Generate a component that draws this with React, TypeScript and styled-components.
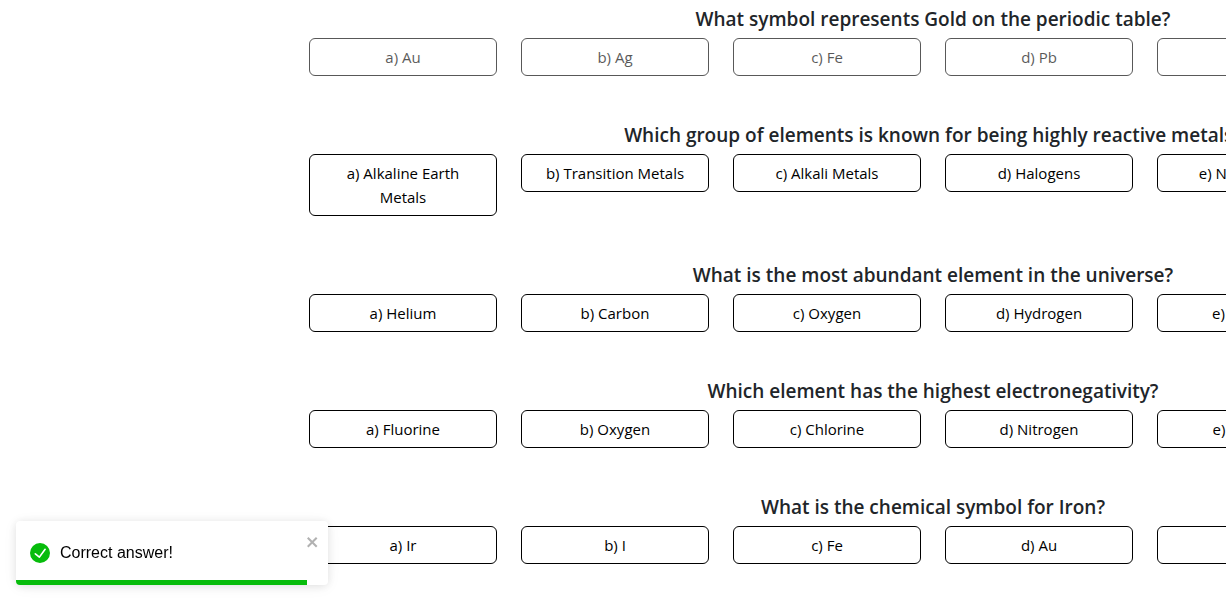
import React, { useState } from "react";
import styled, { createGlobalStyle } from "styled-components";

const GlobalStyle = createGlobalStyle`
  *, *::before, *::after { box-sizing: border-box; }
  body {
    margin: 0;
    background: #fff;
    color: #212529;
    font-family: "Segoe UI", "Open Sans", "Noto Sans", sans-serif;
    font-size: 15px;
    line-height: 24px;
  }
`;

const Page = styled.main`
  overflow: hidden;
  min-height: 100vh;
  padding: 7px 0 48px 309px;
`;

const Quiz = styled.div`
  display: flex;
  flex-direction: column;
  gap: 47px;
  width: max-content;
`;

const Question = styled.section`
  display: flex;
  flex-direction: column;
  gap: 7px;
`;

const Title = styled.h2`
  margin: 0;
  font-size: 19px;
  font-weight: 600;
  line-height: 24px;
  text-align: center;
`;

const Options = styled.div`
  display: grid;
  grid-template-columns: repeat(6, 188px);
  gap: 24px;
  align-items: start;
`;

const Option = styled.button`
  padding: 6px 12px;
  border: 1px solid #000;
  border-radius: 6px;
  background: transparent;
  color: #000;
  font: inherit;
  text-align: center;
  cursor: pointer;

  &:disabled {
    opacity: 0.65;
    cursor: default;
  }
`;

const Toast = styled.div`
  position: fixed;
  left: 16px;
  bottom: 28px;
  display: flex;
  align-items: center;
  gap: 10px;
  width: 312px;
  height: 64px;
  padding: 0 8px 0 14px;
  overflow: hidden;
  border-radius: 4px;
  background: #fff;
  box-shadow: 0 1px 10px rgba(0, 0, 0, 0.1), 0 2px 15px rgba(0, 0, 0, 0.05);
  color: #000;
  font-family: "Liberation Sans", Arial, sans-serif;
  font-size: 16px;
`;

const Message = styled.span`
  flex: 1;
`;

const Close = styled.button`
  display: flex;
  align-self: flex-start;
  margin: 13px 0 0;
  padding: 0;
  border: 0;
  background: transparent;
  color: #000;
  opacity: 0.3;
  cursor: pointer;
`;

const Progress = styled.div`
  position: absolute;
  left: 0;
  bottom: 0;
  height: 5px;
  background: #07bc0c;
`;

const questions = [
  { title: "What symbol represents Gold on the periodic table?", options: ["Au", "Ag", "Fe", "Pb", "Hg"], answered: true },
  {
    title: "Which group of elements is known for being highly reactive metals?",
    options: ["Alkaline Earth Metals", "Transition Metals", "Alkali Metals", "Halogens", "Noble Gases"],
  },
  { title: "What is the most abundant element in the universe?", options: ["Helium", "Carbon", "Oxygen", "Hydrogen", "Nitrogen"] },
  { title: "Which element has the highest electronegativity?", options: ["Fluorine", "Oxygen", "Chlorine", "Nitrogen", "Bromine"] },
  { title: "What is the chemical symbol for Iron?", options: ["Ir", "I", "Fe", "Au", "In"] },
];

export default function App() {
  const [open, setOpen] = useState(true);
  const remaining = 93.3;

  return (
    <>
      <GlobalStyle />
      <Page>
        <Quiz>
          {questions.map((q) => (
            <Question key={q.title}>
              <Title>{q.title}</Title>
              <Options>
                {q.options.map((text, i) => (
                  <Option key={text} type="button" disabled={q.answered}>
                    {`${"abcde"[i]}) ${text}`}
                  </Option>
                ))}
              </Options>
            </Question>
          ))}
        </Quiz>
      </Page>
      {open && (
        <Toast role="alert">
          <svg viewBox="0 0 24 24" width="20" height="20" fill="#07bc0c" aria-hidden="true">
            <path d="M12 0a12 12 0 1012 12A12.014 12.014 0 0012 0zm6.927 8.2l-6.845 9.289a1.011 1.011 0 01-1.43.188l-4.888-3.908a1 1 0 111.25-1.562l4.076 3.261 6.227-8.451a1 1 0 111.61 1.183z" />
          </svg>
          <Message>Correct answer!</Message>
          <Close type="button" aria-label="close" onClick={() => setOpen(false)}>
            <svg viewBox="0 0 14 16" width="14" height="16" fill="currentColor" aria-hidden="true">
              <path
                fillRule="evenodd"
                d="M7.71 8.23l3.75 3.75-1.48 1.48-3.75-3.75-3.75 3.75L1 11.98l3.75-3.75L1 4.48 2.48 3l3.75 3.75L9.98 3l1.48 1.48-3.75 3.75z"
              />
            </svg>
          </Close>
          <Progress style={{ width: `${remaining}%` }} />
        </Toast>
      )}
    </>
  );
}
